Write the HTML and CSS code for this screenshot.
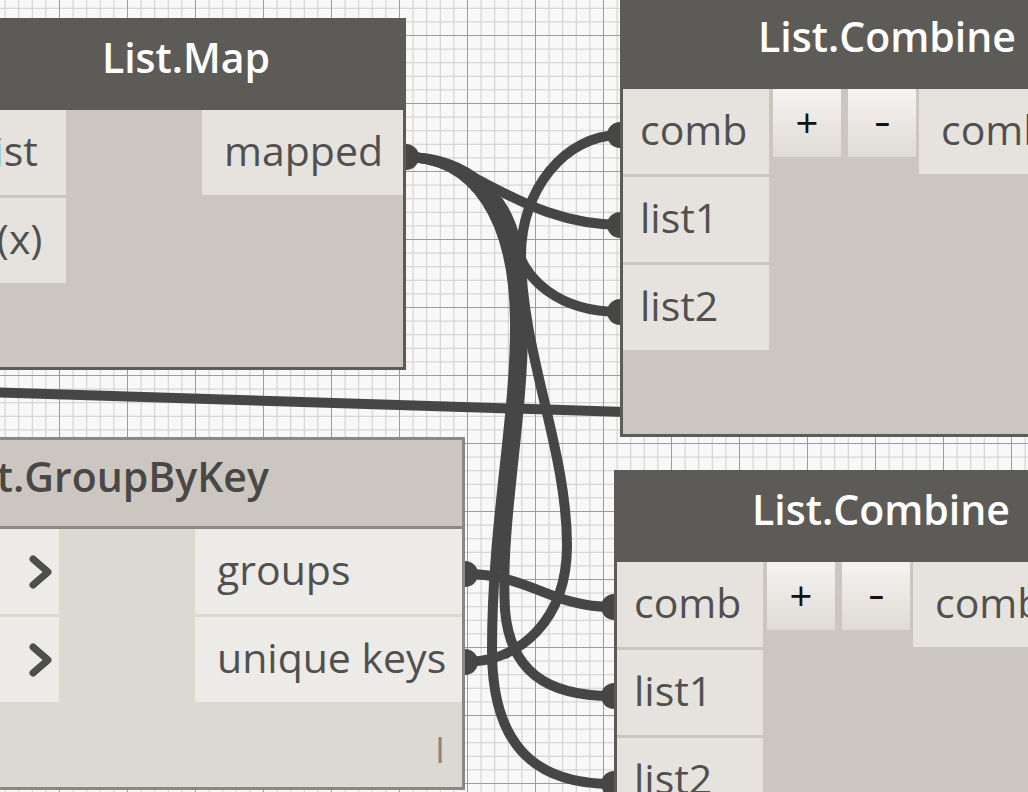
FILE: index.html
```html
<!DOCTYPE html>
<html lang="en">
<head>
<meta charset="utf-8">
<title>Dynamo graph</title>
<link rel="stylesheet" href="styles.css">
</head>
<body>
<div class="canvas">
  <svg class="wires" width="1028" height="792" viewBox="0 0 1028 792">
    <defs>
      <pattern id="grid" width="68" height="68" patternUnits="userSpaceOnUse" x="59" y="35">
        <rect width="68" height="68" fill="#f8f8f8"/>
        <g fill="#cfcfcf">
          <rect x="13.6" y="0" width="1" height="68"/>
          <rect x="27.2" y="0" width="1" height="68"/>
          <rect x="40.8" y="0" width="1" height="68"/>
          <rect x="54.4" y="0" width="1" height="68"/>
          <rect x="0" y="13.6" width="68" height="1"/>
          <rect x="0" y="27.2" width="68" height="1"/>
          <rect x="0" y="40.8" width="68" height="1"/>
          <rect x="0" y="54.4" width="68" height="1"/>
        </g>
        <g fill="#9c9c9c">
          <rect x="0" y="0" width="1" height="68"/>
          <rect x="0" y="0" width="68" height="1"/>
        </g>
      </pattern>
    </defs>
    <rect width="1028" height="792" fill="url(#grid)"/>
    <g fill="none" stroke="#464646" stroke-width="10">
      <path d="M-20,392 L625,412"/>
      <path d="M406,157 C470,157 520,225 622,225"/>
      <path d="M406,157 C470,157 508,200 515,240 C522,280 560,312 620,312"/>
      <path d="M406,157 C480,157 522,220 523,320 C524,420 500,520 505,610 C510,670 545,696 612,696"/>
      <path d="M406,157 C475,157 514,220 515,320 C516,420 492,520 492,650 C492,740 530,784 612,784"/>
      <path d="M620,135 C565,135 521,190 521,255 C521,350 567,450 567,545 C567,620 520,662 465,662"/>
      <path d="M465,574 C530,574 550,607 612,607"/>
    </g>
    <g fill="#464646">
      <circle cx="406" cy="157" r="13"/>
      <circle cx="620" cy="135" r="13"/>
      <circle cx="620" cy="225" r="13"/>
      <circle cx="620" cy="312" r="13"/>
      <circle cx="465" cy="574" r="13"/>
      <circle cx="465" cy="662" r="13"/>
      <circle cx="614" cy="607" r="13"/>
      <circle cx="614" cy="696" r="13"/>
      <circle cx="614" cy="784" r="13"/>
    </g>
  </svg>

  <div class="node node-map">
    <div class="node-header"><div class="title">List.Map</div></div>
    <div class="node-body">
      <div class="inputs map-inputs">
        <div class="port">list</div>
        <div class="port">f(x)</div>
      </div>
      <div class="spacer"></div>
      <div class="outputs map-outputs">
        <div class="port">mapped</div>
      </div>
    </div>
  </div>

  <div class="node node-group">
    <div class="node-header"><div class="title">List.GroupByKey</div></div>
    <div class="node-body">
      <div class="inputs group-inputs">
        <div class="port chevron-port">
          <svg class="chevron" width="24" height="34" viewBox="0 0 24 34"><polyline points="4,4 19,17 4,30"/></svg>
        </div>
        <div class="port chevron-port">
          <svg class="chevron" width="24" height="34" viewBox="0 0 24 34"><polyline points="4,4 19,17 4,30"/></svg>
        </div>
      </div>
      <div class="spacer"></div>
      <div class="outputs group-outputs">
        <div class="port">groups</div>
        <div class="port">unique keys</div>
      </div>
    </div>
    <div class="node-footer"><span class="lacing">I</span></div>
  </div>

  <div class="node node-combine combine-top">
    <div class="node-header"><div class="title">List.Combine</div></div>
    <div class="node-body">
      <div class="inputs combine-inputs">
        <div class="port">comb</div>
        <div class="port">list1</div>
        <div class="port">list2</div>
      </div>
      <div class="buttons">
        <div class="btn">+</div>
        <div class="btn"><span class="minus">-</span></div>
      </div>
      <div class="outputs combine-outputs">
        <div class="port">comb</div>
      </div>
    </div>
  </div>

  <div class="node node-combine combine-bottom">
    <div class="node-header"><div class="title">List.Combine</div></div>
    <div class="node-body">
      <div class="inputs combine-inputs">
        <div class="port">comb</div>
        <div class="port">list1</div>
        <div class="port">list2</div>
      </div>
      <div class="buttons">
        <div class="btn">+</div>
        <div class="btn"><span class="minus">-</span></div>
      </div>
      <div class="outputs combine-outputs">
        <div class="port">comb</div>
      </div>
    </div>
  </div>
</div>
</body>
</html>
```

FILE: styles.css
```css
html, body {
  margin: 0;
  padding: 0;
  background: #f8f8f8;
}

.canvas {
  position: relative;
  width: 1028px;
  height: 792px;
  overflow: hidden;
  background: #f8f8f8;
  font-family: "Open Sans", "Noto Sans", sans-serif;
}

.wires {
  position: absolute;
  left: 0;
  top: 0;
}

/* ---------- nodes ---------- */
.node {
  position: absolute;
  box-sizing: border-box;
  display: flex;
  flex-direction: column;
  border: 3px solid #5d5b58;
  background: #cbc6c0;
}

.node-header {
  flex: none;
  box-sizing: border-box;
  height: 89px;
  padding-top: 8px;
  background: #5d5b58;
  border-bottom: 3px solid #5d5b58;
}

.title {
  font-size: 41px;
  font-weight: 600;
  line-height: 57px;
  text-align: center;
  color: #ffffff;
  white-space: nowrap;
}

.node-body {
  display: flex;
  align-items: flex-start;
  flex: 1;
}

.inputs,
.outputs {
  display: flex;
  flex-direction: column;
  gap: 3px;
  flex: none;
}

.spacer {
  flex: 1;
}

.port {
  box-sizing: border-box;
  height: 85px;
  line-height: 81px;
  font-size: 41px;
  color: #505050;
  background: #e6e3de;
  white-space: nowrap;
  overflow: hidden;
}

.inputs .port {
  padding-left: 17px;
}

.outputs .port {
  padding-left: 22px;
}

/* ---------- List.Map ---------- */
.node-map {
  left: -34px;
  top: 18px;
  width: 440px;
  height: 352px;
}

.map-inputs {
  width: 97px;
}

.map-inputs .port {
  padding-left: 14px;
}

.map-outputs {
  width: 201px;
}

/* ---------- List.GroupByKey ---------- */
.node-group {
  left: -253px;
  top: 437px;
  width: 718px;
  height: 353px;
  border-color: #8a8784;
  background: #dcd9d3;
}

.node-group .node-header {
  background: #cbc7c0;
  border-bottom-color: #8a8784;
}

.node-group .title {
  color: #4a4846;
}

.node-group .node-body {
  flex: none;
}

.node-group .port {
  background: #ecebe7;
}

.group-inputs {
  width: 309px;
}

.chevron-port {
  display: flex;
  align-items: center;
  justify-content: flex-end;
  padding-right: 6px;
}

.chevron {
  display: block;
  fill: none;
  stroke: #4e4e4e;
  stroke-width: 7;
  stroke-linecap: round;
  stroke-linejoin: round;
}

.group-outputs {
  width: 267px;
}

.node-footer {
  flex: 1;
  display: flex;
  justify-content: flex-end;
  align-items: flex-end;
  padding: 0 17px 19px 0;
}

.lacing {
  font-size: 36px;
  line-height: 36px;
  color: #8b857f;
}

/* ---------- List.Combine ---------- */
.node-combine {
  width: 540px;
}

.combine-top {
  left: 620px;
  top: -3px;
  height: 440px;
}

.combine-top .title {
  padding-right: 6px;
}

.combine-bottom {
  left: 614px;
  top: 470px;
  height: 360px;
}

.combine-bottom .title {
  padding-right: 6px;
}

.combine-inputs {
  width: 146px;
}

.buttons {
  display: flex;
  gap: 7px;
  margin-left: 4px;
  flex: none;
}

.btn {
  width: 68px;
  height: 68px;
  display: flex;
  align-items: center;
  justify-content: center;
  font-size: 40px;
  line-height: 1;
  color: #111111;
  background: linear-gradient(to bottom, #f5f3f1, #dfdbd6);
}

.minus {
  display: inline-block;
  transform: scaleX(1.3);
  margin-top: -6px;
}

.combine-outputs {
  width: 250px;
  margin-left: 3px;
}
```
